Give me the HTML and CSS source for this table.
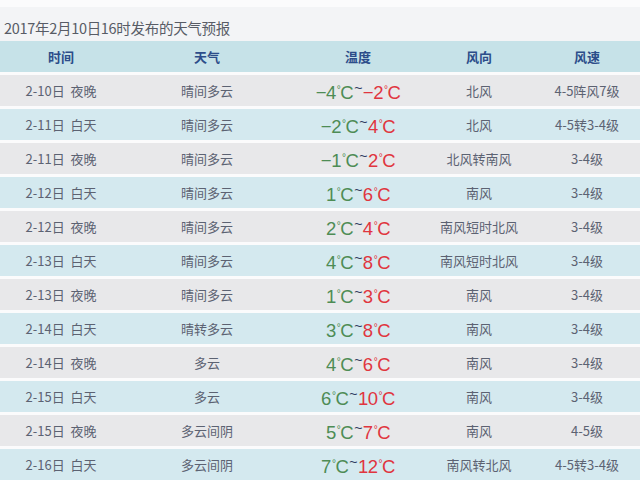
FILE: index.html
```html
<!DOCTYPE html>
<html lang="zh">
<head>
<meta charset="utf-8">
<link rel="stylesheet" href="styles.css">
</head>
<body>
<div class="page">
  <div class="title">2017年2月10日16时发布的天气预报</div>
  <div class="table">
    <div class="row head">
      <div>时间</div><div>天气</div><div>温度</div><div>风向</div><div>风速</div>
    </div>
    <div class="row grey"><div>2-10日&nbsp;&nbsp;夜晚</div><div>晴间多云</div><div class="temp"><span class="lo">−4<i>°</i>C</span><span class="t">~</span><span class="hi">−2<i>°</i>C</span></div><div>北风</div><div>4-5阵风7级</div></div>
    <div class="row blue"><div>2-11日&nbsp;&nbsp;白天</div><div>晴间多云</div><div class="temp"><span class="lo">−2<i>°</i>C</span><span class="t">~</span><span class="hi">4<i>°</i>C</span></div><div>北风</div><div>4-5转3-4级</div></div>
    <div class="row grey"><div>2-11日&nbsp;&nbsp;夜晚</div><div>晴间多云</div><div class="temp"><span class="lo">−1<i>°</i>C</span><span class="t">~</span><span class="hi">2<i>°</i>C</span></div><div>北风转南风</div><div>3-4级</div></div>
    <div class="row blue"><div>2-12日&nbsp;&nbsp;白天</div><div>晴间多云</div><div class="temp"><span class="lo">1<i>°</i>C</span><span class="t">~</span><span class="hi">6<i>°</i>C</span></div><div>南风</div><div>3-4级</div></div>
    <div class="row grey"><div>2-12日&nbsp;&nbsp;夜晚</div><div>晴间多云</div><div class="temp"><span class="lo">2<i>°</i>C</span><span class="t">~</span><span class="hi">4<i>°</i>C</span></div><div>南风短时北风</div><div>3-4级</div></div>
    <div class="row blue"><div>2-13日&nbsp;&nbsp;白天</div><div>晴间多云</div><div class="temp"><span class="lo">4<i>°</i>C</span><span class="t">~</span><span class="hi">8<i>°</i>C</span></div><div>南风短时北风</div><div>3-4级</div></div>
    <div class="row grey"><div>2-13日&nbsp;&nbsp;夜晚</div><div>晴间多云</div><div class="temp"><span class="lo">1<i>°</i>C</span><span class="t">~</span><span class="hi">3<i>°</i>C</span></div><div>南风</div><div>3-4级</div></div>
    <div class="row blue"><div>2-14日&nbsp;&nbsp;白天</div><div>晴转多云</div><div class="temp"><span class="lo">3<i>°</i>C</span><span class="t">~</span><span class="hi">8<i>°</i>C</span></div><div>南风</div><div>3-4级</div></div>
    <div class="row grey"><div>2-14日&nbsp;&nbsp;夜晚</div><div>多云</div><div class="temp"><span class="lo">4<i>°</i>C</span><span class="t">~</span><span class="hi">6<i>°</i>C</span></div><div>南风</div><div>3-4级</div></div>
    <div class="row blue"><div>2-15日&nbsp;&nbsp;白天</div><div>多云</div><div class="temp"><span class="lo">6<i>°</i>C</span><span class="t">~</span><span class="hi">10<i>°</i>C</span></div><div>南风</div><div>3-4级</div></div>
    <div class="row grey"><div>2-15日&nbsp;&nbsp;夜晚</div><div>多云间阴</div><div class="temp"><span class="lo">5<i>°</i>C</span><span class="t">~</span><span class="hi">7<i>°</i>C</span></div><div>南风</div><div>4-5级</div></div>
    <div class="row blue"><div>2-16日&nbsp;&nbsp;白天</div><div>多云间阴</div><div class="temp"><span class="lo">7<i>°</i>C</span><span class="t">~</span><span class="hi">12<i>°</i>C</span></div><div>南风转北风</div><div>4-5转3-4级</div></div>
  </div>
</div>
</body>
</html>
```

FILE: styles.css
```css
html, body {
  margin: 0;
  padding: 0;
  background: #fbfbfc;
}
body {
  font-family: "Noto Sans CJK SC", "Noto Sans", sans-serif;
  width: 640px;
  height: 480px;
  overflow: hidden;
}
.page {
  padding-top: 7px;
}
.title {
  background: #f3f4f6;
  height: 34px;
  line-height: 42px;
  padding-left: 4px;
  font-size: 14.5px;
  color: #585c66;
  letter-spacing: -0.3px;
}
.table {
  display: flex;
  flex-direction: column;
  gap: 3px;
}
.row {
  display: grid;
  grid-template-columns: 122px 170px 132px 110px 106px;
  height: 31px;
  align-items: center;
  text-align: center;
  font-size: 13px;
  color: #5c6272;
}
.row.head {
  background: #c6e2e8;
  color: #2c4d8a;
  font-weight: bold;
}
.row.grey {
  background: #e8e8ea;
}
.row.blue {
  background: #d4e9ef;
}
.temp {
  font-family: "Liberation Sans", Arial, sans-serif;
  font-size: 18.5px;
  letter-spacing: -0.5px;
  line-height: 1;
  padding-top: 2px;
}
.temp i {
  font-style: normal;
  font-size: 10px;
  vertical-align: 6px;
  margin-left: 1px;
}
.lo {
  color: #4e8c55;
}
.hi {
  color: #e0353f;
}
.t {
  color: #2c3a5e;
  font-size: 14px;
  vertical-align: 6px;
  margin: 0 1px;
}
```
